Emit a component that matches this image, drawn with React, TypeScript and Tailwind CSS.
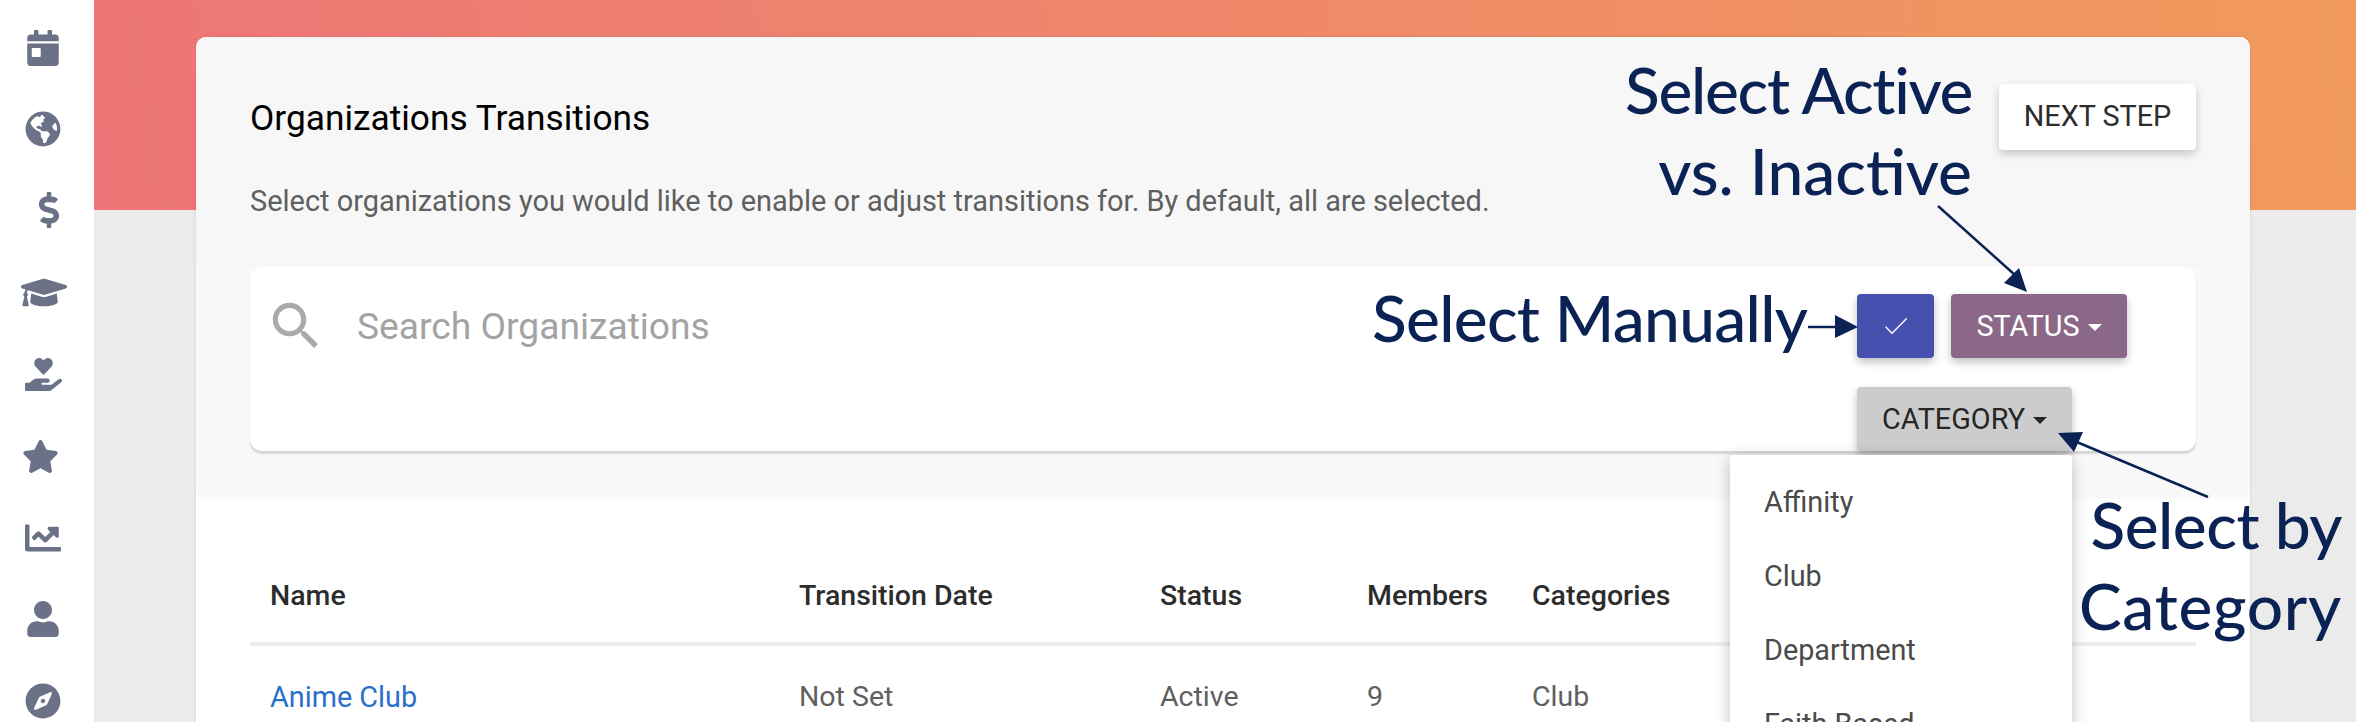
import { FaCalendarDay, FaChartLine, FaCompass, FaDollarSign, FaGlobeAmericas, FaGraduationCap, FaHandHoldingHeart, FaStar, FaUser } from 'react-icons/fa';

const categories = ['Affinity', 'Club', 'Department', 'Faith Based'];

function Annotation({ className, children }: { className: string; children: React.ReactNode }) {
    return (
        <div className={`absolute whitespace-nowrap font-['Lato',sans-serif] text-[64px] leading-[64px] font-medium text-[#0b2354] ${className}`}>
            {children}
        </div>
    );
}

export default function App() {
    return (
        <div className="relative flex h-[722px] w-[2356px] overflow-hidden bg-white font-['Roboto',sans-serif]">
            {/* Sidebar */}
            <aside className="flex w-[94px] shrink-0 flex-col gap-[45.2px] pt-[30px] pl-[25px] text-[#6b7288]">
                <FaCalendarDay size={36} className="shrink-0" />
                <FaGlobeAmericas size={36} className="shrink-0" />
                <FaDollarSign size={36} className="ml-[6px] shrink-0" />
                <FaGraduationCap size={37} className="-ml-[4px] w-[46px] shrink-0" />
                <FaHandHoldingHeart size={37} className="shrink-0" />
                <FaStar size={37} className="-ml-[3px] shrink-0" />
                <FaChartLine size={36} className="shrink-0" />
                <FaUser size={36} className="shrink-0" />
                <FaCompass size={36} className="shrink-0" />
            </aside>

            {/* Main area */}
            <main className="flex-1 bg-[#ebebeb] bg-[linear-gradient(80deg,#ed7577,#f19a5c)] bg-[length:100%_210px] bg-no-repeat pt-[37px] pl-[102px]">
                <div className="h-[700px] w-[2054px] overflow-hidden rounded-t-[10px] bg-white shadow-[0_0_3px_rgba(0,0,0,0.12)]">
                    <div className="flex h-[230px] items-start justify-between bg-[#f7f7f7] px-[54px]">
                        <div>
                            <h1 className="mt-[57px] text-[35.3px] leading-[48px] text-black">Organizations Transitions</h1>
                            <p className="mt-[38px] text-[28.95px] leading-[42px] text-[#5f5f5f]">
                                Select organizations you would like to enable or adjust transitions for. By default, all are selected.
                            </p>
                        </div>
                        <button className="mt-[47px] h-[66px] w-[197px] rounded-[4px] bg-white text-[28.8px] text-[#2c2c2c] shadow-[0_4px_8px_rgba(0,0,0,0.2)]">
                            NEXT STEP
                        </button>
                    </div>

                    <div className="h-[232px] rounded-b-[8px] bg-[#f9f9f9] px-[54px]">
                        <div className="relative flex h-[184px] items-start rounded-[12px] bg-white pr-[69px] shadow-[0_3px_2px_rgba(0,0,0,0.14)]">
                            <svg viewBox="0 0 24 24" className="mt-[28px] ml-[15px] h-[62px] w-[62px] fill-[#aaaaaa]">
                                <path d="M15.5 14h-.79l-.28-.27C15.41 12.59 16 11.11 16 9.5 16 5.91 13.09 3 9.5 3S3 5.91 3 9.5 5.91 16 9.5 16c1.61 0 3.09-.59 4.23-1.57l.27.28v.79l5 4.99L20.49 19l-4.99-5zm-6 0C7.01 14 5 11.99 5 9.5S7.01 5 9.5 5 14 7.01 14 9.5 11.99 14 9.5 14z" />
                            </svg>
                            <span className="mt-[35px] ml-[30px] text-[37.2px] leading-[48px] text-[#a3a3a3]">Search Organizations</span>
                            <div className="mt-[27px] ml-auto flex w-[270px] flex-wrap gap-x-[17px] gap-y-[29px]">
                                <button className="flex h-[64px] w-[77px] items-center justify-center rounded-[4px] bg-[#4650ae] shadow-[0_4px_8px_rgba(0,0,0,0.25)]">
                                    <svg viewBox="0 0 24 24" className="h-[32px] w-[32px] fill-white">
                                        <path d="M9 16.6 4.6 12.2l-.8.8L9 18.2 20.4 6.8l-.8-.8z" />
                                    </svg>
                                </button>
                                <button className="flex h-[64px] w-[176px] items-center justify-center gap-[8px] rounded-[4px] bg-[#8b6888] pt-[2px] text-[28.8px] text-white shadow-[0_4px_8px_rgba(0,0,0,0.25)]">
                                    STATUS
                                    <span className="h-0 w-0 border-x-[7px] border-t-[7px] border-x-transparent border-t-white" />
                                </button>
                                <button className="flex h-[64px] w-[215px] items-center justify-center gap-[8px] rounded-[4px] bg-[#cccccc] pt-[2px] text-[28.8px] text-[#262626] shadow-[0_4px_8px_rgba(0,0,0,0.25)]">
                                    CATEGORY
                                    <span className="h-0 w-0 border-x-[7px] border-t-[7px] border-x-transparent border-t-[#262626]" />
                                </button>
                            </div>
                        </div>
                    </div>

                    <div className="px-[54px] text-[28.5px]">
                        <div className="grid h-[147px] grid-cols-[529px_361px_207px_165px_1fr] items-end border-b-[4px] border-[#eeeeee] pb-[24px] pl-[20px] font-medium text-[#2c2c2c]">
                            <span>Name</span>
                            <span>Transition Date</span>
                            <span>Status</span>
                            <span>Members</span>
                            <span>Categories</span>
                        </div>
                        <div className="grid grid-cols-[529px_361px_207px_165px_1fr] pt-[30px] pl-[20px] text-[#5f5f5f]">
                            <a href="#" className="text-[28.8px] text-[#2a6fc9]">Anime Club</a>
                            <span>Not Set</span>
                            <span>Active</span>
                            <span>9</span>
                            <span>Club</span>
                        </div>
                    </div>
                </div>
            </main>

            {/* Category dropdown */}
            <ul className="absolute top-[455px] left-[1730px] h-[300px] w-[342px] rounded-[4px] bg-white pt-[10px] pl-[34px] text-[28.8px] leading-[74px] text-[#4a4a4a] shadow-[0_4px_16px_rgba(0,0,0,0.25)]">
                {categories.map((name) => (
                    <li key={name}>{name}</li>
                ))}
            </ul>

            {/* Annotations */}
            <Annotation className="top-[58px] right-[384px] tracking-[-1.3px]">Select Active</Annotation>
            <Annotation className="top-[139px] right-[384px]">vs. Inactive</Annotation>
            <Annotation className="top-[286px] left-[1372px] tracking-[-0.7px]">Select Manually</Annotation>
            <Annotation className="top-[493px] right-[14px] tracking-[-0.5px]">Select by</Annotation>
            <Annotation className="top-[574px] right-[14px] tracking-[0.75px]">Category</Annotation>
            <svg viewBox="0 0 2356 722" className="pointer-events-none absolute inset-0 h-[722px] w-[2356px]">
                <g stroke="#0b2354" strokeWidth="2.5" fill="#0b2354">
                    <line x1="1938" y1="206" x2="2015" y2="275" />
                    <line x1="1808" y1="327" x2="1840" y2="327" />
                    <line x1="2208" y1="497" x2="2072" y2="440" />
                </g>
                <g fill="#0b2354">
                    <polygon points="2027,292 2019,268 2004,283" />
                    <polygon points="1858,327 1835,315 1835,338" />
                    <polygon points="2058,433 2083,432 2074,452" />
                </g>
            </svg>
        </div>
    );
}
